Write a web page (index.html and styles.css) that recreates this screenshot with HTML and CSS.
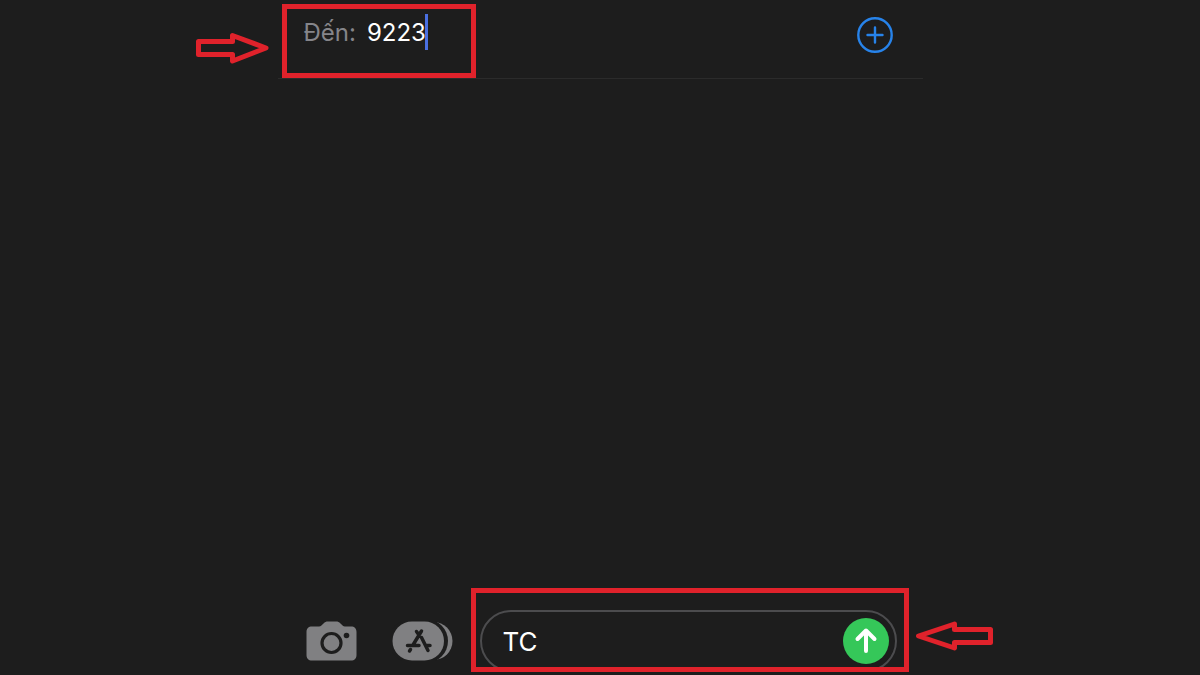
FILE: index.html
```html
<!DOCTYPE html>
<html lang="vi">
<head>
    <meta charset="UTF-8">
    <meta name="viewport" content="width=device-width, initial-scale=1.0">
    <title>TC - 9223</title>
    <link rel="stylesheet" href="styles.css">
</head>
<body>
    <div class="container">
        <header class="recipient">
            <div class="to-field">
                <label for="to">Đến:</label>
                <input type="text" id="to" value="9223">
                <span class="cursor"></span>
            </div>
            <button class="add-btn" aria-label="+">
                <svg width="36" height="36" viewBox="0 0 36 36" fill="none" stroke="#2783ea" stroke-width="2.4" stroke-linecap="round">
                    <circle cx="18" cy="18" r="16.700"/>
                    <path d="M10.500 18h15M18 10.500v15"/>
                </svg>
            </button>
            <div class="mark mark-to"></div>
            <svg class="arrow arrow-to" width="74" height="32" viewBox="0 0 74 32" fill="none" stroke="#e0222b" stroke-width="5" stroke-linejoin="round">
                <path d="M2.500 9.500H36.500V3.500L70 16 36.500 29V22.500H2.500Z"/>
            </svg>
        </header>

        <main class="messages"></main>

        <footer class="compose">
            <button class="camera-btn" aria-label="Camera">
                <svg width="51" height="40" viewBox="0 0 51 40">
                    <path fill="#808082" d="M6 5.500h7c2 0 3-1.500 4.500-3C19 1 20 .5 22 .5h8c2 0 3 .5 4.500 2s2.500 3 4.500 3h6c3.500 0 5.500 2 5.500 5.500v23c0 3.500-2 5.500-5.500 5.500H6C2.500 39.500.5 37.500.5 34V11c0-3.500 2-5.500 5.500-5.500Z"/>
                    <circle cx="25.500" cy="22" r="9.500" fill="none" stroke="#1d1d1d" stroke-width="3.200"/>
                    <circle cx="40.500" cy="14.500" r="2.800" fill="#1d1d1d"/>
                </svg>
            </button>
            <button class="apps-btn" aria-label="App Store">
                <svg width="61" height="40" viewBox="0 0 61 40">
                    <rect x="22" y="1" width="38.500" height="38" rx="19" fill="#808082"/>
                    <rect x="-3" y="-2" width="59" height="44" rx="22" fill="#1d1d1d"/>
                    <rect x=".5" y=".5" width="51.500" height="39" rx="19.500" fill="#808082"/>
                    <path fill="none" stroke="#1d1d1d" stroke-width="3.500" stroke-linecap="round" d="M15.500 24.500H27M34.500 24.500H38M29.500 10 21 24M24.500 10.500 27 14M29.500 16.500 36 29.500M18.500 28.500 17.500 30"/>
                </svg>
            </button>
            <div class="message-box">
                <input type="text" id="message" value="TC" aria-label="SMS">
                <button class="send-btn" aria-label="Send">
                    <svg width="46" height="46" viewBox="0 0 46 46" fill="none" stroke="#fff" stroke-width="4" stroke-linecap="round" stroke-linejoin="round">
                        <path d="M23 33V12.500M14.500 21 23 12.500 31.500 21"/>
                    </svg>
                </button>
            </div>
            <div class="mark mark-message"></div>
            <svg class="arrow arrow-message" width="78" height="30" viewBox="0 0 78 30" fill="none" stroke="#e0222b" stroke-width="5" stroke-linejoin="round">
                <path d="M75.500 8.500H39.500V3L3.500 15 39.500 27V21.500H75.500Z"/>
            </svg>
        </footer>
    </div>
</body>
</html>
```
FILE: styles.css
```css
* {
    box-sizing: border-box;
}

body {
    margin: 0;
    background-color: #1d1d1d;
    color: #fff;
    font-family: Inter, sans-serif;
    font-size: 24px;
}

.container {
    display: flex;
    flex-direction: column;
    width: 100%;
    max-width: 645px;
    min-height: 100vh;
    margin: 0 auto;
}

button {
    display: flex;
    flex-shrink: 0;
    padding: 0;
    background: none;
    border: none;
    cursor: pointer;
}

input {
    min-width: 0;
    padding: 0;
    background: none;
    border: none;
    outline: none;
    color: #fff;
    font: inherit;
}

/* recipient row */
.recipient {
    position: relative;
    display: flex;
    align-items: center;
    justify-content: space-between;
    padding: 14px 30px 22px 26px;
    border-bottom: 1px solid #2b2b2b;
}

.to-field {
    display: flex;
    align-items: center;
    padding-bottom: 6px;
}

.to-field label {
    margin-right: 11px;
    color: #85858a;
}

.to-field input {
    width: 58px;
}

.cursor {
    width: 3px;
    height: 36px;
    background-color: #4a6fe0;
}

.messages {
    flex: 1;
}

/* bottom bar */
.compose {
    position: relative;
    display: flex;
    align-items: center;
    padding: 0 26px 3px 28px;
}

.camera-btn {
    margin-right: 35px;
}

.apps-btn {
    margin-right: 27px;
}

.message-box {
    display: flex;
    flex: 1;
    align-items: center;
    min-width: 0;
    height: 62px;
    padding: 0 6px 0 21px;
    border: 2px solid #4c4c4e;
    border-radius: 31px;
}

.message-box input {
    flex: 1;
    font-size: 26px;
}

.send-btn {
    background-color: #35c759;
    border-radius: 50%;
}

/* red guide marks drawn over the screen */
.mark {
    position: absolute;
    border: 5px solid #e0222b;
    pointer-events: none;
}

.mark-to {
    top: 4px;
    left: 4px;
    width: 194px;
    height: 74px;
}

.mark-message {
    right: 14px;
    bottom: 3px;
    width: 438px;
    height: 84px;
}

.arrow {
    position: absolute;
}

.arrow-to {
    top: 32px;
    right: 100%;
    margin-right: 8px;
}

.arrow-message {
    bottom: 24px;
    left: 100%;
    margin-left: -8px;
}
```
